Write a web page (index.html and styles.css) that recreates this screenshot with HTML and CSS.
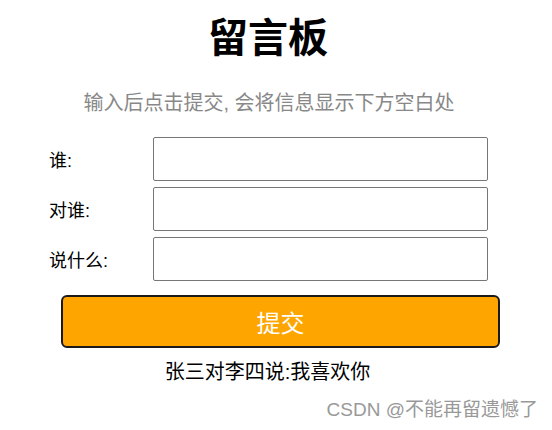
FILE: index.html
```html
<!DOCTYPE html>
<html lang="zh-CN">
<head>
    <meta charset="UTF-8">
    <meta name="viewport" content="width=device-width, initial-scale=1.0">
    <title>留言板</title>
    <link rel="stylesheet" href="styles.css">
</head>
<body>
    <h1 class="title">留言板</h1>
    <p class="tip">输入后点击提交, 会将信息显示下方空白处</p>

    <div class="form">
        <div class="row">
            <label for="from">谁:</label>
            <input type="text" id="from">
        </div>
        <div class="row">
            <label for="to">对谁:</label>
            <input type="text" id="to">
        </div>
        <div class="row">
            <label for="msg">说什么:</label>
            <input type="text" id="msg">
        </div>
    </div>

    <button class="submit" id="submit">提交</button>

    <div class="messages" id="messages">
        <div class="message">张三对李四说:我喜欢你</div>
    </div>

    <div class="watermark">CSDN @不能再留遗憾了</div>

    <script>
        document.getElementById('submit').addEventListener('click', function() {
            var from = document.getElementById('from').value;
            var to = document.getElementById('to').value;
            var msg = document.getElementById('msg').value;
            if (from == '' || to == '' || msg == '') {
                return;
            }
            var div = document.createElement('div');
            div.className = 'message';
            div.textContent = from + '对' + to + '说:' + msg;
            document.getElementById('messages').appendChild(div);
        });
    </script>
</body>
</html>
```

FILE: styles.css
```css
body {
    margin: 0;
    font-family: "Liberation Sans", "Noto Sans CJK SC", sans-serif;
    color: #000;
    background: #fff;
    position: relative;
    min-height: 430px;
    overflow: hidden;
}

.title {
    margin: 12px 0 0 0;
    font-size: 40px;
    line-height: 52px;
    font-weight: bold;
    text-align: center;
    padding-right: 16px;
}

.tip {
    margin: 25px 0 0 0;
    font-size: 20px;
    line-height: 28px;
    color: #888;
    text-align: center;
    padding-right: 14px;
}

.form {
    margin-top: 20px;
    padding-left: 49px;
    display: flex;
    flex-direction: column;
    gap: 6px;
}

.row {
    display: flex;
    align-items: center;
}

.row label {
    width: 104px;
    font-size: 18px;
}

.row input {
    box-sizing: border-box;
    width: 335px;
    height: 44px;
    border: 1px solid #767676;
    border-radius: 2px;
    font-size: 18px;
    padding: 0 6px;
}

.submit {
    display: block;
    box-sizing: border-box;
    margin: 14px 0 0 61px;
    width: 439px;
    height: 53px;
    background-color: #ffa500;
    border: 2px solid #1a1a1a;
    border-radius: 6px;
    color: #fff;
    font-family: inherit;
    font-size: 24px;
    cursor: pointer;
}

.messages {
    margin-top: 10px;
    text-align: center;
    padding-right: 17px;
}

.message {
    font-size: 20px;
    line-height: 28px;
}

.watermark {
    position: absolute;
    right: 14px;
    bottom: 9px;
    font-size: 19px;
    color: #999;
}
```
